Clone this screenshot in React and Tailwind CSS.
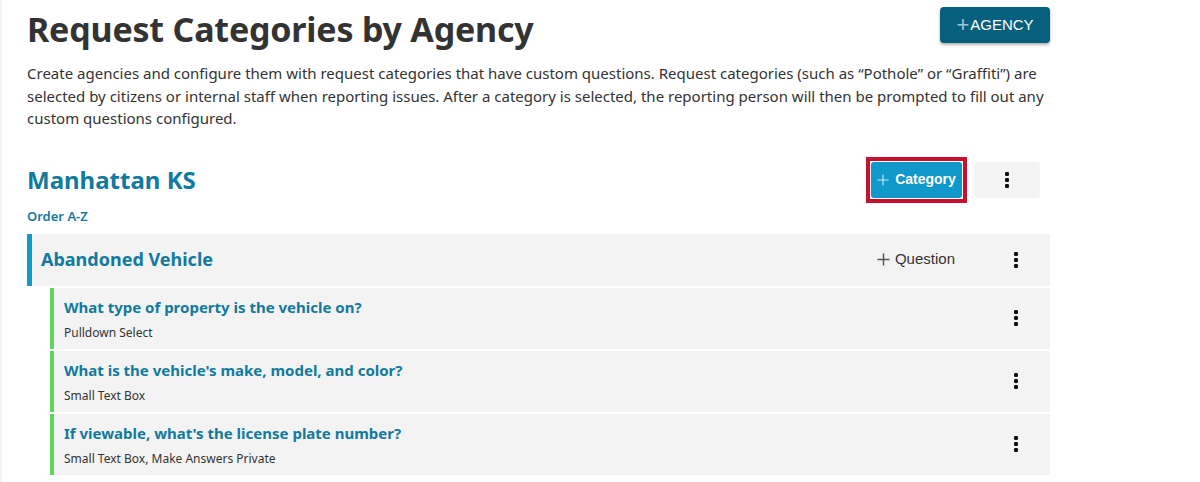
import React from "react";

function Kebab({ className = "" }) {
  return (
    <svg width="4" height="16" viewBox="0 0 4 16" className={className}>
      <rect x="0" y="0" width="4" height="4" rx="1.2" fill="#111" />
      <rect x="0" y="6" width="4" height="4" rx="1.2" fill="#111" />
      <rect x="0" y="12" width="4" height="4" rx="1.2" fill="#111" />
    </svg>
  );
}

function PlusIcon({ size = 14, color = "currentColor", stroke = 1.6 }) {
  return (
    <svg width={size} height={size} viewBox="0 0 14 14">
      <path d="M7 0.5V13.5M0.5 7H13.5" stroke={color} strokeWidth={stroke} fill="none" />
    </svg>
  );
}

const questions = [
  { q: "What type of property is the vehicle on?", t: "Pulldown Select" },
  { q: "What is the vehicle's make, model, and color?", t: "Small Text Box" },
  { q: "If viewable, what's the license plate number?", t: "Small Text Box, Make Answers Private" },
];

export default function App() {
  const sans = { fontFamily: '"Noto Sans", "Open Sans", sans-serif' };
  return (
    <div className="w-[1200px] h-[482px] bg-white flex overflow-hidden" style={sans}>
      <div className="w-[2px] bg-[#f4f4f4]" />
      <div className="w-[1048px] pl-[25px]">
        <div className="flex items-start justify-between pt-[7px]">
          <h1 className="text-[34px] leading-[40px] font-bold text-[#333333] mt-[2px] tracking-[-0.2px]">
            Request Categories by Agency
          </h1>
          <button
            className="h-[36px] w-[110px] rounded-[4px] bg-[#075f7e] text-white text-[15px] flex items-center justify-center shadow-[0_2px_3px_rgba(0,0,0,0.3)]"
            style={{ fontFamily: '"Liberation Sans", Arial, sans-serif' }}
          >
            <span className="text-[#9ec6d4] text-[22px] leading-none font-light mr-[1px]">+</span>
            AGENCY
          </button>
        </div>
        <p className="mt-[13px] text-[15px] leading-[22.5px] text-[#333333] w-[1040px]">
          Create agencies and configure them with request categories that have custom questions. Request categories (such as “Pothole” or “Graffiti”) are selected by citizens or internal staff when reporting issues. After a category is selected, the reporting person will then be prompted to fill out any custom questions configured.
        </p>

        <div className="flex items-center justify-between mt-[27px] pr-[10px]">
          <h2 className="text-[24px] leading-[30px] font-bold text-[#117a9e]">Manhattan KS</h2>
          <div className="flex items-center gap-[7px]">
            <div className="border-[4px] border-[#c8102e] p-[1px]">
              <button
                className="h-[36px] w-[91px] rounded-[3px] bg-[#0f98c9] text-white flex items-center justify-center gap-[6px] text-[14px] font-bold"
                style={{ fontFamily: '"Liberation Sans", Arial, sans-serif' }}
              >
                <PlusIcon size={12} color="#cdeaf5" stroke={1.3} />
                Category
              </button>
            </div>
            <button className="h-[36px] w-[66px] rounded-[4px] bg-[#f4f4f4] flex items-center justify-center">
              <Kebab />
            </button>
          </div>
        </div>

        <div className="mt-[4px] text-[13px] leading-[18px] font-semibold text-[#117a9e]">Order A-Z</div>

        <div className="mt-[9px] h-[52px] bg-[#f3f3f3] border-l-[5px] border-[#0e9ccf] flex items-center justify-between pl-[9px] pr-[32px]">
          <div className="text-[18px] font-bold text-[#117a9e]">Abandoned Vehicle</div>
          <div className="flex items-center gap-[59px]">
            <div
              className="flex items-center gap-[5px] text-[15px] text-[#333]"
              style={{ fontFamily: '"Liberation Sans", Arial, sans-serif' }}
            >
              <PlusIcon size={13} color="#555" stroke={1.6} />
              Question
            </div>
            <Kebab />
          </div>
        </div>

        <div className="pl-[23px] flex flex-col gap-[2px] mt-[2px]">
          {questions.map((item) => (
            <div
              key={item.q}
              className="h-[61px] bg-[#f3f3f3] border-l-[4px] border-[#5cd65c] flex items-center justify-between pl-[10px] pr-[32px]"
            >
              <div className="flex flex-col self-start pt-[9px]">
                <div className="text-[15px] leading-[20px] font-bold text-[#117a9e]">{item.q}</div>
                <div className="text-[12px] leading-[16px] text-[#333] mt-[8px]">{item.t}</div>
              </div>
              <Kebab />
            </div>
          ))}
        </div>
      </div>
    </div>
  );
}
